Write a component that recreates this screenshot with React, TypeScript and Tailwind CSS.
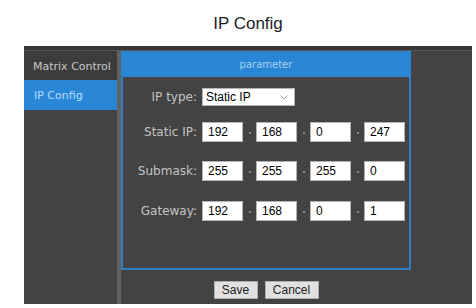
import React from "react";

const ipRows = [
  { label: "Static IP:", values: ["192", "168", "0", "247"], mt: "mt-[15px]" },
  { label: "Submask:", values: ["255", "255", "255", "0"], mt: "mt-[19px]" },
  { label: "Gateway:", values: ["192", "168", "0", "1"], mt: "mt-[20px]" },
];

const Octet: React.FC<{ value: string }> = ({ value }) => (
  <input
    readOnly
    value={value}
    className="w-[41px] h-[20px] bg-white border border-[#b4b4b4] pl-[5px] text-[12px] text-black outline-none font-['Liberation_Sans',Arial,sans-serif]"
  />
);

const Dot = () => (
  <div className="w-[13px] h-[20px] flex items-center justify-center">
    <span className="w-[2px] h-[2px] bg-[#8a8a8a] mt-[1px]" />
  </div>
);

const App: React.FC = () => {
  return (
    <div className="w-[476px] h-[308px] bg-white overflow-hidden">
      {/* TITLE */}
      <div className="h-[46px] pl-[24px] pr-[4px] flex items-center justify-center">
        <span className="text-[17px] text-[#222] font-['Liberation_Sans',Arial,sans-serif] mt-[1px]">
          IP Config
        </span>
      </div>

      {/* CONSOLE */}
      <div className="ml-[24px] w-[448px] h-[258px] bg-[#434343] border-t-4 border-[#363636] flex flex-col font-['DejaVu_Sans',Verdana,sans-serif]">
        <div className="h-px bg-[#575757]" />
        <div className="flex flex-1">
          {/* SIDEBAR */}
          <div className="w-[93px] flex flex-col">
            <div className="h-[29px] bg-[#3c3c3c] pl-[9px] pt-[3px] flex items-center text-[11px] text-[#c8c8c8]">
              Matrix Control
            </div>
            <div className="h-[30px] bg-[#2a87d6] pl-[10px] pt-[3px] flex items-center text-[11px] text-[#b5dcff]">
              IP Config
            </div>
          </div>
          <div className="w-[4px] bg-[#626262]" />

          {/* MAIN */}
          <div className="flex flex-col">
            <div className="w-[290px]">
              <div className="h-[26px] bg-[#2a86d4] flex items-center justify-center text-[10px] text-[#a6d0f3]">
                parameter
              </div>
              <div className="h-[193px] border-2 border-t-0 border-[#2e80c6] flex flex-col">
                {/* IP TYPE */}
                <div className="mt-[10px] h-[20px] flex items-center">
                  <div className="w-[74px] text-right text-[12px] text-[#c4c4c4]">IP type:</div>
                  <div className="ml-[5px] w-[93px] h-[18px] bg-white border border-[#b4b4b4] flex items-center justify-between pl-[3px] pr-[6px]">
                    <span className="text-[12px] text-black font-['Liberation_Sans',Arial,sans-serif]">
                      Static IP
                    </span>
                    <svg width="8" height="5" viewBox="0 0 8 5" fill="none">
                      <path d="M0.5 0.5l3.5 3.5L7.5 0.5" stroke="#8a8a8a" strokeWidth="0.9" />
                    </svg>
                  </div>
                </div>

                {ipRows.map((row) => (
                  <div key={row.label} className={`${row.mt} h-[20px] flex items-center`}>
                    <div className="w-[74px] text-right text-[12px] text-[#c4c4c4]">{row.label}</div>
                    <div className="ml-[5px] flex items-center">
                      <Octet value={row.values[0]} />
                      <Dot />
                      <Octet value={row.values[1]} />
                      <Dot />
                      <Octet value={row.values[2]} />
                      <Dot />
                      <Octet value={row.values[3]} />
                    </div>
                  </div>
                ))}
              </div>
            </div>

            {/* ACTIONS */}
            <div className="w-[290px] mt-[11px] flex justify-center gap-[7px] font-['Liberation_Sans',Arial,sans-serif]">
              <button className="w-[44px] h-[18px] bg-[#e1e1e1] border border-[#adadad] text-[12px] text-[#222] leading-none">
                Save
              </button>
              <button className="w-[54px] h-[18px] bg-[#e1e1e1] border border-[#adadad] text-[12px] text-[#222] leading-none">
                Cancel
              </button>
            </div>
          </div>
        </div>
      </div>
    </div>
  );
};

export default App;
